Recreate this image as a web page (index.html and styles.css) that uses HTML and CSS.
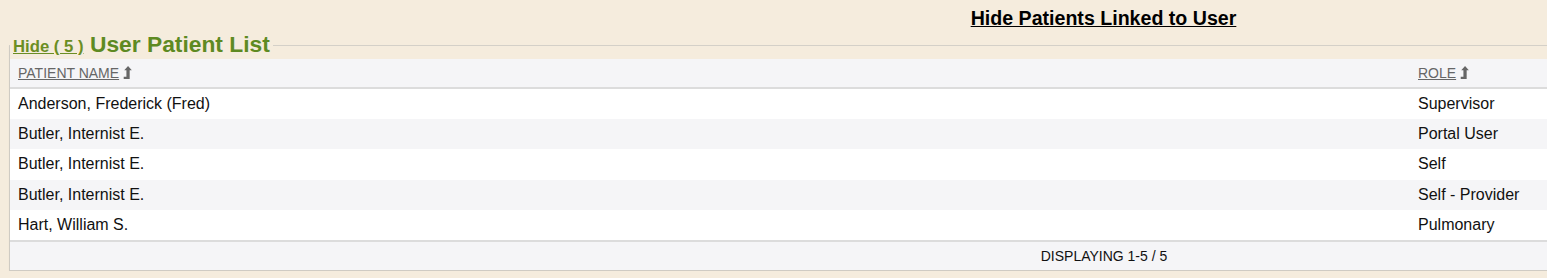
FILE: index.html
```html
<!DOCTYPE html>
<html>
<head>
    <title>User Patient List</title>
    <link rel="stylesheet" href="styles.css">
</head>
<body>
    <div class="page">
        <div class="top-link">
            <a href="#">Hide Patients Linked to User</a>
        </div>

        <fieldset class="patient-box">
            <legend>
                <a href="#" class="toggle">Hide ( 5 )</a>
                <span class="box-title">User Patient List</span>
            </legend>

            <table class="grid">
                <thead>
                    <tr>
                        <th class="col-name">
                            <a href="#">PATIENT NAME</a>
                            <svg class="sort" width="9" height="13" viewBox="0 0 8 12"><path d="M4.5 0 L8 4 L6 4 L6 12 L0.5 12 L0.5 10 L3 10 L3 4 L1 4 Z"/></svg>
                        </th>
                        <th class="col-role">
                            <a href="#">ROLE</a>
                            <svg class="sort" width="9" height="13" viewBox="0 0 8 12"><path d="M4.5 0 L8 4 L6 4 L6 12 L0.5 12 L0.5 10 L3 10 L3 4 L1 4 Z"/></svg>
                        </th>
                    </tr>
                </thead>
                <tbody>
                    <tr><td>Anderson, Frederick (Fred)</td><td>Supervisor</td></tr>
                    <tr><td>Butler, Internist E.</td><td>Portal User</td></tr>
                    <tr><td>Butler, Internist E.</td><td>Self</td></tr>
                    <tr><td>Butler, Internist E.</td><td>Self - Provider</td></tr>
                    <tr><td>Hart, William S.</td><td>Pulmonary</td></tr>
                </tbody>
                <tfoot>
                    <tr><td colspan="2">DISPLAYING 1-5 / 5</td></tr>
                </tfoot>
            </table>
        </fieldset>
    </div>
</body>
</html>
```

FILE: styles.css
```css
body {
    margin: 0;
    background-color: #f5ecdd;
    font-family: "Liberation Sans", Arial, sans-serif;
}
.page {
    width: 2207px;
}
.top-link {
    text-align: center;
    padding-top: 7px;
    height: 22px;
    line-height: 22px;
}
.top-link a {
    color: #000;
    font-weight: bold;
    font-size: 19.6px;
}
.patient-box {
    margin: 3px 0 0 9px;
    padding: 0;
    width: 2188px;
    min-width: 0;
    border: 1px solid #cfcbc3;
    border-top-color: #d4d0c8;
    box-shadow: 0 1px 1px rgba(0, 0, 0, 0.06);
}
.patient-box legend {
    padding: 0 3px;
    margin-left: 0;
    line-height: 24px;
}
.toggle {
    color: #6b8e23;
    font-weight: bold;
    font-size: 16.7px;
}
.box-title {
    color: #5e8a22;
    font-weight: bold;
    font-size: 22.8px;
    margin-left: 2px;
}
.grid {
    width: 100%;
    border-collapse: collapse;
    font-size: 16px;
    color: #111;
}
.grid th {
    background-color: #f5f5f7;
    text-align: left;
    font-weight: normal;
    font-size: 14px;
    height: 28px;
    padding: 0 8px;
    border-bottom: 2px solid #dcdcdc;
}
.grid th a {
    color: #666;
}
.col-name {
    width: 1384px;
}
.sort {
    fill: #666;
    vertical-align: -1px;
}
.grid td {
    height: 30.2px;
    padding: 0 8px;
    background-color: #fff;
}
.grid tbody tr:nth-child(even) td {
    background-color: #f5f5f7;
}
.grid tfoot td {
    background-color: #f5f5f7;
    border-top: 2px solid #dcdcdc;
    text-align: center;
    font-size: 14px;
    height: 28px;
}
```
